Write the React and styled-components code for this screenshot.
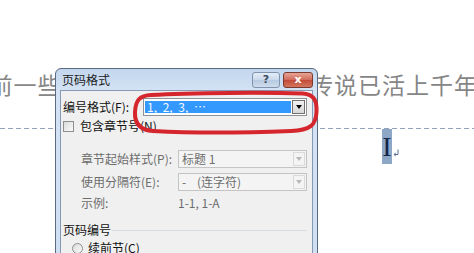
import styled, { createGlobalStyle } from "styled-components";

const GlobalStyle = createGlobalStyle`
  html, body {
    margin: 0;
    padding: 0;
    background: #fff;
  }
  body {
    width: 474px;
    height: 253px;
    overflow: hidden;
    font-family: "Noto Sans CJK SC", "Noto Sans", sans-serif;
  }
`;

const Page = styled.div`
  position: relative;
  width: 474px;
  height: 253px;
  overflow: hidden;
  background: #fff;
`;

// document behind the dialog
const DocLine = styled.p`
  margin: 0 0 0 -10.5px;
  padding-top: 73px;
  font-size: 23px;
  line-height: 23px;
  letter-spacing: 1px;
  color: #868686;
  white-space: nowrap;
`;

// the part hidden by the dialog, spaced so the right half lands where it should
const Covered = styled.span`
  letter-spacing: 1.85px;
`;

const HeaderRule = styled.div`
  margin-top: 32px;
  height: 1px;
  background: repeating-linear-gradient(90deg, #94a3bb 0 5px, transparent 5px 8px);
`;

const CursorLine = styled.div`
  display: flex;
  align-items: flex-end;
  padding-left: 382px;
`;

const Selected = styled.span`
  width: 10px;
  height: 35px;
  background: #8fa7c7;
  color: #15254a;
  font-family: "Liberation Serif", serif;
  font-size: 28px;
  line-height: 35px;
  text-align: center;
`;

const ParaMark = styled.svg`
  margin: 0 0 7px 1px;
`;

// dialog
const Dialog = styled.div`
  position: absolute;
  left: 55px;
  top: 68px;
  width: 263px;
  height: 200px;
  box-sizing: border-box;
  border: 1px solid #5a6a80;
  border-radius: 6px 6px 0 0;
  background: linear-gradient(180deg, #c2d6ee 0, #d4e3f4 22px, #cfdff2 100%);
  padding: 0 4px;
  display: flex;
  flex-direction: column;
`;

const TitleBar = styled.div`
  height: 21px;
  display: flex;
  align-items: flex-start;
`;

const Title = styled.span`
  padding-left: 2px;
  font-size: 12px;
  line-height: 22px;
  color: #1b1b1b;
`;

const CaptionButtons = styled.div`
  margin: 3px 0 0 auto;
  display: flex;
  gap: 3px;
`;

const CaptionButton = styled.div`
  width: ${(p) => (p.$close ? 30 : 28)}px;
  height: 16px;
  box-sizing: border-box;
  border: 1px solid ${(p) => (p.$close ? "#7a3a30" : "#7f93ad")};
  border-radius: 3px;
  background: ${(p) =>
    p.$close
      ? "linear-gradient(180deg, #e7a597 0, #d06a5a 50%, #c24a38 51%, #d3775f 100%)"
      : "linear-gradient(180deg, #e4edf8 0, #c9d8ea 50%, #b6c9e0 51%, #cfdcec 100%)"};
  color: ${(p) => (p.$close ? "#fff" : "#3b4a60")};
  font-family: "DejaVu Sans", sans-serif;
  font-size: 11px;
  font-weight: bold;
  line-height: 14px;
  text-align: center;
`;

const Client = styled.div`
  flex: 1;
  background: #f0f0f0;
  border: 1px solid #8699b3;
  padding: 7px 5px 0 2px;
  display: flex;
  flex-direction: column;
  font-size: 12px;
  color: #111;
`;

const Row = styled.div`
  display: grid;
  grid-template-columns: ${(p) => p.$label || "80px"} 1fr;
  align-items: center;
  height: 18px;
  margin-top: ${(p) => p.$gap || 0}px;
  margin-left: ${(p) => p.$indent || 0}px;
  color: ${(p) => (p.$dim ? "#6d6d6d" : "#111")};
`;

const Label = styled.span`
  white-space: nowrap;
  line-height: 18px;
`;

const Combo = styled.div`
  height: 18px;
  box-sizing: border-box;
  border: 1px solid ${(p) => (p.$disabled ? "#c4c4c4" : "#8f9296")};
  background: ${(p) => (p.$disabled ? "#f4f4f4" : "#fff")};
  display: flex;
  align-items: stretch;
  padding: ${(p) => (p.$disabled ? "0" : "2px 1px 2px 1px")};
`;

const ComboText = styled.span`
  flex: 1;
  padding-left: ${(p) => (p.$selected ? 2 : 3)}px;
  background: ${(p) => (p.$selected ? "#3399ff" : "transparent")};
  color: ${(p) => (p.$selected ? "#f4f8ff" : "#6d6d6d")};
  line-height: ${(p) => (p.$selected ? 12 : 16)}px;
  font-size: 12px;
  word-spacing: ${(p) => (p.$selected ? 3 : 0)}px;
  white-space: pre;
  margin-right: 1px;
`;

const DropButton = styled.span`
  width: ${(p) => (p.$disabled ? 12 : 13)}px;
  box-sizing: border-box;
  border: 1px solid ${(p) => (p.$disabled ? "#dadada" : "#707070")};
  margin: ${(p) => (p.$disabled ? "1px" : "-1px 0")};
  background: ${(p) =>
    p.$disabled ? "#f4f4f4" : "linear-gradient(180deg, #f2f2f2, #d8d8d8)"};
  display: flex;
  align-items: center;
  justify-content: center;
  &::after {
    content: "";
    border-left: 3.5px solid transparent;
    border-right: 3.5px solid transparent;
    border-top: 4px solid ${(p) => (p.$disabled ? "#b8b8b8" : "#000")};
  }
`;

const Check = styled.span`
  display: inline-block;
  width: 11px;
  height: 11px;
  box-sizing: border-box;
  border: 1px solid #8e8f8f;
  background: linear-gradient(135deg, #d9dadb, #fbfbfb);
  border-radius: ${(p) => (p.$round ? "50%" : "0")};
`;

const OptionRow = styled.div`
  display: flex;
  align-items: center;
  height: 18px;
  margin-top: ${(p) => p.$gap || 0}px;
  padding-left: ${(p) => p.$indent || 0}px;
  gap: ${(p) => p.$space || 6}px;
  line-height: 18px;
`;

const GroupRow = styled.div`
  display: flex;
  align-items: center;
  height: 18px;
  margin-top: 9px;
  line-height: 18px;
  &::after {
    content: "";
    flex: 1;
    height: 1px;
    margin-left: 1px;
    background: #d8dde2;
  }
`;

const Annotation = styled.svg`
  position: absolute;
  left: 75px;
  top: 21px;
  overflow: visible;
`;

export default function App() {
  return (
    <Page>
      <GlobalStyle />
      <DocLine>
        前一些<Covered>日子在网上看到一篇报</Covered>传说已活上千年的古树
      </DocLine>
      <HeaderRule />
      <CursorLine>
        <Selected>I</Selected>
        <ParaMark width="6" height="8" viewBox="0 0 6 8">
          <path d="M5 0.5 V5.5 H1.2 M2.8 4 L1 5.5 L2.8 7" fill="none" stroke="#5b6f99" strokeWidth="1" />
        </ParaMark>
      </CursorLine>

      <Dialog>
        <TitleBar>
          <Title>页码格式</Title>
          <CaptionButtons>
            <CaptionButton>?</CaptionButton>
            <CaptionButton $close>x</CaptionButton>
          </CaptionButtons>
        </TitleBar>
        <Client>
          <Row>
            <Label>编号格式(F):</Label>
            <Combo>
              <ComboText $selected>1, 2, 3, …</ComboText>
              <DropButton />
            </Combo>
          </Row>
          <OptionRow $gap={1}>
            <Check />
            <span>包含章节号(N)</span>
          </OptionRow>
          <Row $gap={15} $indent={18} $label="97px" $dim>
            <Label>章节起始样式(P):</Label>
            <Combo $disabled>
              <ComboText>标题 1</ComboText>
              <DropButton $disabled />
            </Combo>
          </Row>
          <Row $gap={5} $indent={18} $label="97px" $dim>
            <Label>使用分隔符(E):</Label>
            <Combo $disabled>
              <ComboText>-    (连字符)</ComboText>
              <DropButton $disabled />
            </Combo>
          </Row>
          <Row $gap={3} $indent={18} $label="97px" $dim>
            <Label>示例:</Label>
            <Label>1-1, 1-A</Label>
          </Row>
          <GroupRow>页码编号</GroupRow>
          <OptionRow $indent={9} $space={5}>
            <Check $round />
            <span>续前节(C)</span>
          </OptionRow>
        </Client>
        <Annotation width="190" height="46" viewBox="0 0 190 46">
          <path
            d="M20 5 C60 2.5 140 2.5 172 3.5 C184 4.5 186 12 185.5 22 C185 35 179 40.5 160 41 C120 42.5 60 43 22 41 C8 40 3.5 32 4 22 C4.5 10 9 5.5 20 5 Z"
            fill="none"
            stroke="#d4262c"
            strokeWidth="4"
            strokeLinejoin="round"
          />
        </Annotation>
      </Dialog>
    </Page>
  );
}
